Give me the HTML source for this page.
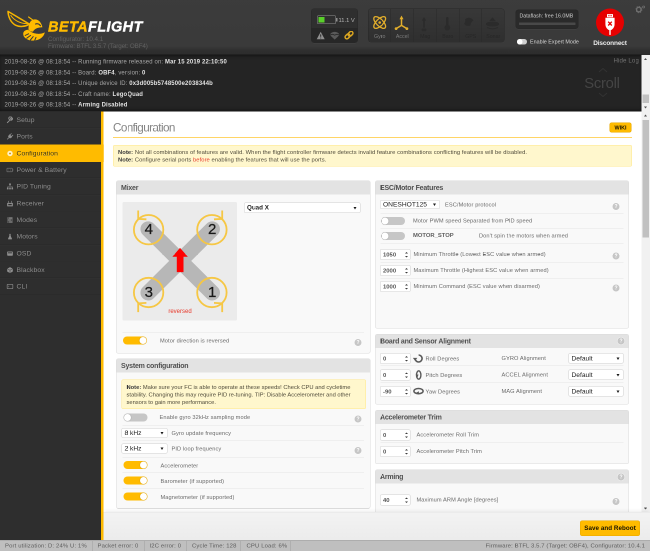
<!DOCTYPE html>
<html lang="en">
<head>
<meta charset="utf-8">
<title>Betaflight Configurator</title>
<style>
*{box-sizing:border-box;margin:0;padding:0}
html,body{width:650px;height:551px;overflow:hidden;background:#2e2e2e}
body{font-family:"Liberation Sans",sans-serif;font-size:11px;color:#7d7d7d;position:relative}
#app{position:absolute;left:0;top:0;width:1300px;height:1102px;transform:scale(.5);transform-origin:0 0;overflow:hidden;will-change:transform}
.abs{position:absolute}
/* ---------- header ---------- */
#header{position:absolute;left:0;top:0;width:1300px;height:109px;background:linear-gradient(#3c3c3c 0,#3a3a3a 85%,#303030 92%,#2c2c2c 100%)}
#logo-text{position:absolute;left:96px;top:38px;font-size:29px;line-height:30px;font-weight:bold;font-style:italic;color:#fff;letter-spacing:.800px;white-space:nowrap;-webkit-text-stroke:.8px currentColor}
#logo-text b{color:#ffbb00}
.ver{position:absolute;left:96px;font-size:12.500px;line-height:14px;color:#626262;white-space:nowrap}
.hbox{position:absolute;background:#2a2a2a;border-radius:5px;box-shadow:0 0 0 1px #272727,0 1px 0 1px #444}
.slab{position:absolute;top:48px;width:45px;text-align:center;font-size:10.5px;line-height:12px;color:#272727;white-space:nowrap}
/* ---------- log ---------- */
#log{position:absolute;left:0;top:109px;width:1283px;height:114px;background:#242424;box-shadow:inset 0 6px 6px -4px #111,inset 0 -6px 6px -4px #111}
#log p{position:absolute;left:9px;font-size:11.900px;line-height:14px;color:#a9a9a9;white-space:nowrap;letter-spacing:.280px}
#log p b{color:#e2e2e2}
/* ---------- sidebar ---------- */
#side{position:absolute;left:0;top:223px;width:202px;height:857px;background:#2e2e2e}
#side li{list-style:none;position:absolute;left:0;width:202px;height:33px;border-bottom:1px solid #292929;border-top:1px solid #323232;color:#8e8e8e;font-size:13.500px;line-height:31px;padding-left:33px;white-space:nowrap;letter-spacing:.200px}
#side li.act{background:#ffbb00;color:#3a2f00;width:207px;height:35px;line-height:33px;border-color:#ffbb00;z-index:2;text-shadow:0 1px 0 rgba(255,255,255,.35)}
/* ---------- content ---------- */
#content{position:absolute;left:202px;top:223px;width:1081px;height:857px;background:#fff;border-left:5px solid #ffbb00;overflow:hidden}
#title{position:absolute;left:226px;top:241px;font-size:23.400px;line-height:28px;color:#858585;white-space:nowrap;letter-spacing:-1.200px}
#tline{position:absolute;left:226px;top:274px;width:1038px;height:2px;background:#ffd566}
.note{position:absolute;background:#fff7cd;border:1px solid #ffe88a;border-radius:3px;color:#4f4a3a;font-size:11.600px;line-height:15px;padding:0;letter-spacing:.130px}
.note p{position:absolute;left:9px;white-space:nowrap}
.note b{color:#3a3a3a}
.box{position:absolute;background:#f9f9f9;border:1px solid #dcdcdc;border-radius:4px;overflow:hidden}
.box h3{position:absolute;left:0;top:0;right:0;height:27px;background:#e3e3e3;color:#505050;font-size:14px;line-height:26px;padding-left:9px;font-weight:bold;white-space:nowrap;letter-spacing:-.420px}
.lbl{position:absolute;font-size:11.300px;line-height:14px;color:#6a6a6a;white-space:nowrap;letter-spacing:.200px}
.sep{position:absolute;height:1px;background:#e6e6e6}
.tg{position:absolute;width:48px;height:16px;border-radius:8px;background:#ffbb00}
.tg i{position:absolute;right:1px;top:1px;width:14px;height:14px;border-radius:50%;background:#fff;box-shadow:0 0 2px rgba(0,0,0,.3)}
.tg.off{background:#c6c6c6}
.tg.off i{right:auto;left:1px}
.inp{position:absolute;height:22px;background:#fff;border:1px solid #cfcfcf;border-radius:3px;color:#555;font-size:11.800px;font-weight:bold;line-height:20px;padding-left:5px;white-space:nowrap}
.inp.sel{font-size:13.300px;color:#222;font-weight:normal;height:20px;line-height:18px}
.help{position:absolute;width:14px;height:14px;border-radius:50%;background:#c6c6c6;color:#fff;font-size:10px;line-height:14px;text-align:center;font-weight:bold;box-shadow:0 0 0 1px rgba(255,255,255,.6)}

.arr{position:absolute;right:7px;top:50%;margin-top:-2px;width:0;height:0;border-left:3.500px solid transparent;border-right:3.500px solid transparent;border-top:5px solid #1a1a1a}
.spin{position:absolute;right:2px;top:0;bottom:0;width:9px}
.spin:before,.spin:after{content:"";position:absolute;left:1px;width:0;height:0;border-left:3px solid transparent;border-right:3px solid transparent}
.spin:before{top:4.500px;border-bottom:3.500px solid #3c3c3c}
.spin:after{bottom:4.500px;border-top:3.500px solid #3c3c3c}
.spin i{display:none}
.ico{position:absolute;left:13px;top:9px;width:14px;height:14px;opacity:.9}
#side li.act .ico{top:10px}
/* ---------- toolbar / status ---------- */
#toolbar{position:absolute;left:207px;top:1024px;width:1093px;height:56px;background:linear-gradient(#f3f3f3,#ececec);border-top:1px solid #e4e4e4;box-shadow:0 -4px 7px -2px rgba(0,0,0,.08)}
.btn{position:absolute;background:#ffbb00;border:1px solid #e8a800;border-radius:4px;color:#1a1400;font-weight:bold;text-align:center;white-space:nowrap}
#status{position:absolute;left:0;top:1080px;width:1300px;height:22px;background:#bfbfbf;border-top:1px solid #9c9c9c;color:#5c5c5c;font-size:11.800px;line-height:20px;letter-spacing:.300px}
#status span{position:absolute;top:0;white-space:nowrap}
#status i{position:absolute;top:0;width:1px;height:22px;background:#9f9f9f}
/* ---------- scrollbars ---------- */
.sb{position:absolute;left:1283px;width:17px;background:#f1f1f1}
.sb u{position:absolute;left:2px;width:13px;background:#c1c1c1}
.sb b{position:absolute;left:5px;width:0;height:0;border-left:3.500px solid transparent;border-right:3.500px solid transparent}
.sb .au{border-bottom:4px solid #505050}
.sb .ad{border-top:4px solid #505050}
</style>
</head>
<body>
<div id="app">

<!-- HEADER -->
<div id="header">
  <div id="logo-text"><b>BETA</b>FLIGHT</div>
  <div class="ver" style="top:71px">Configurator: 10.4.1</div>
  <div class="ver" style="top:85px;letter-spacing:-.200px">Firmware: BTFL 3.5.7 (Target: OBF4)</div>

  <svg class="abs" style="left:0;top:0" width="110" height="110" viewBox="0 0 55 55">
    <g fill="none" stroke="#f5b400" stroke-linejoin="round" stroke-linecap="round">
      <path d="M8 11.400 C8.200 16.500 10.500 22.500 15.500 25.200 C19.500 27.200 25 26.800 29.500 24.200 L8 11.400 Z" stroke-width="1.500"/>
      <path d="M10.800 15.400 C14 20.400 20.500 23.800 27.500 23.600" stroke-width="1"/>
      <path d="M28.600 17 L32.500 19.800" stroke-width="1.200"/>
    </g>
    <g fill="#ffbb00">
      <path d="M30.500 21.500 C32 19.400 35.200 18.800 37.600 20 C40 21.200 41.600 23.600 42.400 27.200 C40 27.200 37.800 27.600 36 28.600 C34.600 29.400 33.600 30.400 33 31.600 C31.200 31.800 29.400 31.200 28.600 29.800 C28.200 27 29 23.800 30.500 21.500 Z"/>
      <path d="M28.200 29.800 C30.200 31.800 33.400 33.400 37 33.800 C39.800 34 42.600 33.600 44.800 32.400 C44 37 39.200 40.600 33 40.600 C27.200 40.600 23 37.400 23.200 33.600 C23.400 31.200 25.600 29.800 28.200 29.800 Z"/>
    </g>
    <g fill="none" stroke="#3a3a3a" stroke-linecap="round">
      <path d="M35.600 24 C37.200 23.400 39.200 24 40.400 25.600" stroke-width="1.200"/>
      <path d="M25.200 35.400 L28.600 33.800 M26.800 38.200 L30.600 35.400 M30.400 40 L33.200 36.600 M34.800 40.200 L36 37.400" stroke-width="1"/>
    </g>
  </svg>

  <!-- quad status -->
  <div class="hbox" style="left:623px;top:18px;width:92px;height:67px;background:linear-gradient(#2f2f2f 0,#2f2f2f 56%,#272727 56%,#272727 100%)">
    <div class="abs" style="left:11px;top:13px;width:38px;height:17px;border:1.500px solid #8f8f8f;border-radius:2px;background:#2f2f2f"></div>
    <div class="abs" style="left:14px;top:16px;width:12px;height:11px;background:#59d02a"></div>
    <div class="abs" style="left:49px;top:18px;width:3px;height:7px;background:#8f8f8f"></div>
    <div class="abs" style="left:54px;top:15px;font-size:11.500px;line-height:14px;color:#b8b8b8;white-space:nowrap">11.1 V</div>
    <svg class="abs" style="left:8px;top:44px" width="80" height="18" viewBox="0 0 40 9">
      <path d="M5.2 0.8 L9.2 8.2 L1.2 8.2 Z" fill="#8f8f8f"/>
      <path d="M5.2 3.4 L5.2 5.8 M5.2 6.6 L5.2 7.4" stroke="#2a2a2a" stroke-width="1"/>
      <path d="M14.6 4.2 C14.6 -0.2 23.8 -0.2 23.8 4.2 L19.2 8.6 Z" fill="#5a5a5a"/>
      <path d="M14.6 4.2 C16 3 17.6 3 19.2 4.2 C20.8 3 22.4 3 23.8 4.2" fill="none" stroke="#2a2a2a" stroke-width=".8"/>
      <g fill="none" stroke="#d9a521" stroke-width="1.5">
        <rect x="29.3" y="3.6" width="5.4" height="3.6" rx="1.8" transform="rotate(-45 32 5.4)"/>
        <rect x="32.3" y="1.0" width="5.4" height="3.6" rx="1.8" transform="rotate(-45 35 2.8)"/>
      </g>
    </svg>
  </div>

  <!-- sensors -->
  <div class="hbox" style="left:737px;top:18px;width:271px;height:66px;background:linear-gradient(#383838,#2f2f2f);overflow:hidden">
    <i class="abs" style="left:44px;top:0;width:1px;height:66px;background:#292929"></i>
    <i class="abs" style="left:90px;top:0;width:1px;height:66px;background:#292929"></i>
    <i class="abs" style="left:135px;top:0;width:1px;height:66px;background:#292929"></i>
    <i class="abs" style="left:181px;top:0;width:1px;height:66px;background:#292929"></i>
    <i class="abs" style="left:226px;top:0;width:1px;height:66px;background:#292929"></i>
    <svg class="abs" style="left:0;top:0" width="271" height="66" viewBox="0 0 135.5 33">
      <g fill="none" stroke="#e2ae2c" stroke-width="1.3">
        <ellipse cx="11.2" cy="13.5" rx="7.6" ry="3.4" transform="rotate(45 11.2 13.5)"/>
        <ellipse cx="11.2" cy="13.5" rx="7.6" ry="3.4" transform="rotate(-45 11.2 13.5)"/>
      </g>
      <circle cx="11.2" cy="13.5" r="1.3" fill="#e2ae2c"/>
      <g stroke="#e2ae2c" stroke-width="1.5" fill="#e2ae2c" stroke-linecap="round">
        <path d="M33 16.400 L33 9.800 M33 16.400 L28 19.400 M33 16.400 L38 19.400" fill="none"/>
        <path d="M33 7.200 L34.500 10 L31.500 10 Z" stroke-width=".6"/>
        <circle cx="27.600" cy="19.600" r="1.400" stroke="none"/>
        <circle cx="38.400" cy="19.600" r="1.400" stroke="none"/>
      </g>
      <g fill="#2b2b2b" stroke="none">
        <path d="M55.5 8 l2.2 3.6 h-1.4 v7 h-1.6 v-7 h-1.4 Z"/>
        <rect x="53.2" y="19.6" width="4.6" height="2.6" rx="1"/>
        <rect x="77.6" y="8" width="2.4" height="9" rx="1.2"/>
        <circle cx="78.8" cy="18.6" r="2.8"/>
        <path d="M96.5 10.5 c3 -3 6.5 -2 8.5 1 c-2 1 -3 3 -3 5 c-3 1 -5.500 0 -6.500 -2 c1.500 -1 1.500 -3 1 -4 Z"/>
        <ellipse cx="124" cy="15" rx="6.6" ry="2.4"/>
        <path d="M124 8.400 l3.200 3.600 h-6.400 Z"/>
        <path d="M118.500 18.400 q5.500 3 11 0" fill="none" stroke="#2b2b2b" stroke-width="1"/>
      </g>
    </svg>
    <div class="slab" style="left:0;color:#7e7e7e">Gyro</div>
    <div class="slab" style="left:45px;color:#7e7e7e">Accel</div>
    <div class="slab" style="left:91px">Mag</div>
    <div class="slab" style="left:136px">Baro</div>
    <div class="slab" style="left:182px">GPS</div>
    <div class="slab" style="left:227px">Sonar</div>
  </div>

  <!-- dataflash -->
  <div class="hbox" style="left:1032px;top:20px;width:124px;height:37px">
    <div class="abs" style="left:7px;top:4px;font-size:10.5px;line-height:14px;color:#cfcfcf;white-space:nowrap">Dataflash: free 16.0MB</div>
    <div class="abs" style="left:6px;top:25px;width:113px;height:5px;background:#494949;border-radius:1px"></div>
  </div>
  <div class="abs" style="left:1034px;top:78px;width:20px;height:11px;border-radius:6px;background:#cfcfcf"><i class="abs" style="left:0;top:0;width:11px;height:11px;border-radius:50%;background:#fff"></i></div>
  <div class="abs" style="left:1060px;top:76px;font-size:10.8px;line-height:14px;color:#d6d6d6;white-space:nowrap">Enable Expert Mode</div>

  <!-- disconnect -->
  <div class="abs" style="left:1192px;top:17px;width:56px;height:56px;border-radius:50%;background:#e60000"></div>
  <svg class="abs" style="left:1192px;top:17px" width="56" height="56" viewBox="0 0 28 28">
    <path d="M11 5.600 h6 v3.200 h-6 Z M9.400 9.200 h9.200 v6.400 c0 3.200 -2 5.400 -3.800 6 h-1.600 c-1.800 -.6 -3.800 -2.800 -3.800 -6 Z" fill="#fff"/>
    <path d="M13.300 21 h1.400 v5.400 h-1.400 Z" fill="#fff"/>
    <path d="M12.200 13.200 l3.600 3.800 M15.800 13.200 l-3.600 3.800" stroke="#e60000" stroke-width="1.300" fill="none"/>
    <path d="M12.300 6.600 h1.200 v1.200 h-1.200 Z M14.500 6.600 h1.200 v1.200 h-1.200 Z" fill="#e60000"/>
  </svg>
  <div class="abs" style="left:1170px;top:78px;width:100px;text-align:center;font-size:13px;line-height:16px;font-weight:bold;color:#ececec;white-space:nowrap;letter-spacing:-.3px">Disconnect</div>

  <!-- gear -->
  <svg class="abs" style="left:1268px;top:8px" width="28" height="22" viewBox="0 0 14 11">
    <circle cx="4.800" cy="5.600" r="2.300" fill="none" stroke="#6e6e6e" stroke-width="1.500"/>
    <circle cx="4.800" cy="5.600" r="3.200" fill="none" stroke="#6e6e6e" stroke-width=".8" stroke-dasharray="1 1.500"/>
    <circle cx="9.600" cy="3" r="1" fill="none" stroke="#6e6e6e" stroke-width=".8"/>
  </svg>
</div>

<!-- LOG -->
<div id="log">
  <p style="top:7px">2019-08-26 @ 08:18:54 -- Running firmware released on: <b>Mar 15 2019 22:10:50</b></p>
  <p style="top:29px">2019-08-26 @ 08:18:54 -- Board: <b>OBF4</b>, version: <b>0</b></p>
  <p style="top:50px">2019-08-26 @ 08:18:54 -- Unique device ID: <b>0x3d005b5748500e2038344b</b></p>
  <p style="top:72px">2019-08-26 @ 08:18:54 -- Craft name: <b>LegoQuad</b></p>
  <p style="top:93px">2019-08-26 @ 08:18:54 -- <b>Arming Disabled</b></p>
</div>

<div class="abs" style="left:1227px;top:113px;font-size:12.300px;line-height:16px;color:#727272;white-space:nowrap;letter-spacing:.200px">Hide Log</div>
<div class="abs" style="left:1164px;top:148px;width:80px;text-align:center;font-size:29.500px;line-height:36px;color:#454545;white-space:nowrap;letter-spacing:-.500px">Scroll</div>
<svg class="abs" style="left:1190px;top:132px" width="32" height="66" viewBox="0 0 16 33"><path d="M4 6 L8 2.500 L12 6 M4 27 L8 30.500 L12 27" fill="none" stroke="#333" stroke-width="1"/></svg>

<!-- SIDEBAR -->
<ul id="side">
  <li style="top:0px"><svg class="ico" viewBox="0 0 16 16"><path d="M2 14 L8.500 7.500 M8.200 7.800 a3.600 3.600 0 1 1 3.600 -5.600 l-2.400 2.400 l2 2 l2.400 -2.400 a3.600 3.600 0 0 1 -5.600 3.600" fill="none" stroke="#999" stroke-width="2.200" stroke-linecap="round"/></svg>Setup</li>
  <li style="top:33px"><svg class="ico" viewBox="0 0 16 16"><path d="M2 14 L5.500 10.500 M4.500 8 L8 11.500 L12 9 L7 4 Z M9 3.500 L11 1.500 M12.500 7 L14.500 5" fill="#999" stroke="#999" stroke-width="1.800" stroke-linecap="round" stroke-linejoin="round"/></svg>Ports</li>
  <li class="act" style="top:66px"><svg class="ico" viewBox="0 0 16 16"><circle cx="8" cy="8" r="6.200" fill="#fff8e0"/><circle cx="8" cy="8" r="2" fill="#b98300"/></svg>Configuration</li>
  <li style="top:100px"><svg class="ico" viewBox="0 0 16 16"><rect x="1" y="4" width="12.500" height="8" rx="1" fill="none" stroke="#777" stroke-width="1.600"/><rect x="14" y="6.500" width="1.500" height="3" fill="#777"/><path d="M4 8 h2 M8.500 8 h2.500 M9.750 6.750 v2.500" stroke="#777" stroke-width="1"/></svg>Power &amp; Battery</li>
  <li style="top:133px"><svg class="ico" viewBox="0 0 16 16"><path d="M8 1.500 v5 M2.500 13 v-4 h11 v4" fill="none" stroke="#999" stroke-width="1.400"/><rect x="6" y="1" width="4" height="4" fill="#999"/><rect x="1" y="11" width="3.600" height="3.600" fill="#999"/><rect x="6.200" y="11" width="3.600" height="3.600" fill="#999"/><rect x="11.400" y="11" width="3.600" height="3.600" fill="#999"/></svg>PID Tuning</li>
  <li style="top:167px"><svg class="ico" viewBox="0 0 16 16"><rect x="1.500" y="6.500" width="13" height="8" rx="1" fill="#999"/><path d="M5 6.500 v-4.500 M11 6.500 v-4.500" stroke="#999" stroke-width="1.400"/><rect x="4" y="9" width="8" height="3" fill="#2e2e2e"/></svg>Receiver</li>
  <li style="top:200px"><svg class="ico" viewBox="0 0 16 16"><rect x="2" y="2" width="12" height="3" rx="1" fill="#999"/><rect x="2" y="6.500" width="12" height="3" rx="1" fill="#999"/><rect x="2" y="11" width="12" height="3" rx="1" fill="#999"/><circle cx="5" cy="3.500" r="1" fill="#2e2e2e"/><circle cx="11" cy="8" r="1" fill="#2e2e2e"/><circle cx="5" cy="12.500" r="1" fill="#2e2e2e"/></svg>Modes</li>
  <li style="top:233px"><svg class="ico" viewBox="0 0 16 16"><path d="M6.500 2 h3 v4.500 l3 6.500 a1 1 0 0 1 -1 1.500 h-7 a1 1 0 0 1 -1 -1.500 l3 -6.500 Z" fill="#999"/></svg>Motors</li>
  <li style="top:267px"><svg class="ico" viewBox="0 0 16 16"><rect x="1.500" y="3.500" width="13" height="9.500" rx="1.500" fill="#999"/><rect x="3.500" y="5.500" width="9" height="2" fill="#2e2e2e"/></svg>OSD</li>
  <li style="top:300px"><svg class="ico" viewBox="0 0 16 16"><path d="M8 1.500 L14.500 5 V11.500 L8 15 L1.500 11.500 V5 Z" fill="#999"/><path d="M1.500 5 L8 8.500 L14.500 5 M8 8.500 V15" stroke="#2e2e2e" stroke-width="1" fill="none"/></svg>Blackbox</li>
  <li style="top:333px"><svg class="ico" viewBox="0 0 16 16"><rect x="1.500" y="3" width="13" height="10" rx="1" fill="none" stroke="#999" stroke-width="1.500"/><path d="M4 6.500 l2 1.500 l-2 1.500" fill="none" stroke="#999" stroke-width="1"/></svg>CLI</li>
</ul>

<!-- CONTENT -->
<div id="content"></div>
<div id="title">Configuration</div>
<div id="tline"></div>

<div class="btn" style="left:1219px;top:245px;width:44px;height:20px;font-size:10.800px;line-height:18px">WIKI</div>

<div class="note" style="left:226px;top:290px;width:1038px;height:43px">
  <p style="top:5px"><b>Note:</b> Not all combinations of features are valid. When the flight controller firmware detects invalid feature combinations conflicting features will be disabled.</p>
  <p style="top:20px"><b>Note:</b> Configure serial ports <span style="color:#e8392b">before</span> enabling the features that will use the ports.</p>
</div>

<!-- Mixer -->
<div class="box" style="left:232px;top:361px;width:509px;height:346px">
  <h3>Mixer</h3>
  <svg class="abs" style="left:12px;top:42px" width="229" height="237" viewBox="122.500 201.500 114.500 118.500">
    <rect x="122.500" y="201.500" width="114.500" height="118.500" rx="1.500" fill="#ebebeb"/>
    <g stroke="#b7b7b7" stroke-width="15.500" stroke-linecap="round">
      <path d="M148.200 228.600 L212.200 292.200 M212.200 228.600 L148.200 292.200"/>
    </g>
    <path d="M180 247.400 L187.800 256.200 L183.500 256.200 L183.500 271.600 L176.800 271.600 L176.800 256.200 L172.400 256.200 Z" fill="#ff0000"/>
    <g fill="none" stroke="#f6c744" stroke-width="1.800">
      <circle cx="148.600" cy="229.200" r="14.700"/>
      <circle cx="211.900" cy="229.200" r="14.700"/>
      <circle cx="148.600" cy="292" r="14.700"/>
      <circle cx="211.900" cy="292" r="14.700"/>
      <path d="M138.200 210 L138.200 218.400 L146.400 218.800"/>
      <path d="M222.200 210 L222.200 218.400 L214 218.800"/>
      <path d="M138.200 311.600 L138.200 302.800 L146.400 302.400"/>
      <path d="M222.200 311.600 L222.200 302.800 L214 302.400"/>
    </g>
    <g font-family="Liberation Sans, sans-serif" font-size="15" fill="#1a1a1a" stroke="#1a1a1a" stroke-width=".250" text-anchor="middle">
      <text x="148.800" y="233.600">4</text>
      <text x="212.200" y="233.600">2</text>
      <text x="148.800" y="296.400">3</text>
      <text x="212.200" y="296.400">1</text>
    </g>
    <text x="180" y="312.600" font-family="Liberation Sans, sans-serif" font-size="6" fill="#e8392b" text-anchor="middle">reversed</text>
  </svg>
  <div class="inp sel" style="left:255px;top:43px;width:233px;height:21px;font-weight:bold;font-size:12.500px;line-height:19px">Quad X<span class="arr"></span></div>
  <div class="sep" style="left:12px;right:12px;top:302px"></div>
  <div class="tg" style="left:13px;top:311px"><i></i></div>
  <div class="lbl" style="left:87px;top:312px">Motor direction is reversed</div>
  <div class="help" style="left:476px;top:316px">?</div>
</div>

<!-- System configuration -->
<div class="box" style="left:232px;top:717px;width:509px;height:300px">
  <h3>System configuration</h3>
  <div class="note" style="left:10px;top:41px;width:489px;height:59px;font-size:11.500px;letter-spacing:.020px">
    <p style="top:7px"><b>Note:</b> Make sure your FC is able to operate at these speeds! Check CPU and cycletime</p>
    <p style="top:22px">stability. Changing this may require PID re-tuning. TIP: Disable Accelerometer and other</p>
    <p style="top:37px">sensors to gain more performance.</p>
  </div>
  <div class="tg off" style="left:14px;top:109px"><i></i></div>
  <div class="lbl" style="left:86px;top:109px">Enable gyro 32kHz sampling mode</div>
  <div class="help" style="left:476px;top:113px">?</div>
  <div class="sep" style="left:12px;right:12px;top:132px"></div>
  <div class="inp sel" style="left:10px;top:138px;width:92px">8 kHz<span class="arr"></span></div>
  <div class="lbl" style="left:110px;top:141px">Gyro update frequency</div>
  <div class="sep" style="left:12px;right:12px;top:163px"></div>
  <div class="inp sel" style="left:10px;top:169px;width:92px">2 kHz<span class="arr"></span></div>
  <div class="lbl" style="left:110px;top:172px">PID loop frequency</div>
  <div class="help" style="left:476px;top:176px">?</div>
  <div class="sep" style="left:12px;right:12px;top:196px"></div>
  <div class="tg" style="left:14px;top:204px"><i></i></div>
  <div class="lbl" style="left:88px;top:206px">Accelerometer</div>
  <div class="sep" style="left:12px;right:12px;top:227px"></div>
  <div class="tg" style="left:14px;top:235px"><i></i></div>
  <div class="lbl" style="left:88px;top:237px">Barometer (if supported)</div>
  <div class="sep" style="left:12px;right:12px;top:259px"></div>
  <div class="tg" style="left:14px;top:267px"><i></i></div>
  <div class="lbl" style="left:88px;top:269px">Magnetometer (if supported)</div>
</div>

<!-- ESC/Motor Features -->
<div class="box" style="left:750px;top:361px;width:508px;height:296px">
  <h3>ESC/Motor Features</h3>
  <div class="inp sel" style="left:9px;top:38px;width:120px;height:18px;line-height:16px">ONESHOT125<span class="arr"></span></div>
  <div class="lbl" style="left:139px;top:40px">ESC/Motor protocol</div>
  <div class="help" style="left:474px;top:44px">?</div>
  <div class="sep" style="left:10px;right:10px;top:64px"></div>
  <div class="tg off" style="left:11px;top:72px"><i></i></div>
  <div class="lbl" style="left:75px;top:72px">Motor PWM speed Separated from PID speed</div>
  <div class="sep" style="left:10px;right:10px;top:94px"></div>
  <div class="tg off" style="left:11px;top:102px"><i></i></div>
  <div class="lbl" style="left:75px;top:101px;font-size:11.700px;font-weight:bold;color:#606060;letter-spacing:0">MOTOR_STOP</div>
  <div class="lbl" style="left:207px;top:102px">Don't spin the motors when armed</div>
  <div class="sep" style="left:10px;right:10px;top:125px"></div>
  <div class="inp" style="left:9px;top:136px;width:61px">1050<span class="spin"><i></i></span></div>
  <div class="lbl" style="left:76px;top:139px">Minimum Throttle (Lowest ESC value when armed)</div>
  <div class="help" style="left:474px;top:143px">?</div>
  <div class="sep" style="left:10px;right:10px;top:163px"></div>
  <div class="inp" style="left:9px;top:168px;width:61px">2000<span class="spin"><i></i></span></div>
  <div class="lbl" style="left:76px;top:171px">Maximum Throttle (Highest ESC value when armed)</div>
  <div class="sep" style="left:10px;right:10px;top:195px"></div>
  <div class="inp" style="left:9px;top:200px;width:61px">1000<span class="spin"><i></i></span></div>
  <div class="lbl" style="left:76px;top:203px">Minimum Command (ESC value when disarmed)</div>
  <div class="help" style="left:474px;top:207px">?</div>
</div>

<!-- Board and Sensor Alignment -->
<div class="box" style="left:750px;top:668px;width:508px;height:141px">
  <h3>Board and Sensor Alignment</h3>
  <div class="help" style="left:484px;top:6px">?</div>
  <div class="inp" style="left:9px;top:37px;width:61px">0<span class="spin"><i></i></span></div>
  <svg class="abs" style="left:74px;top:38px" width="24" height="20" viewBox="0 0 12 10"><path d="M2.600 5 A3.500 3.500 0 1 0 6.100 1.500" fill="none" stroke="#5a5a5a" stroke-width="1.600"/><path d="M.4 4.400 L2.600 7.400 L4.800 4.400 Z" fill="#5a5a5a"/></svg><div class="lbl" style="left:100px;top:41px">Roll Degrees</div>
  <div class="lbl" style="left:252px;top:40px">GYRO Alignment</div>
  <div class="inp sel" style="left:386px;top:37px;width:110px;height:21px;line-height:19px">Default<span class="arr"></span></div>
  <div class="sep" style="left:10px;right:10px;top:62px"></div>
  <div class="inp" style="left:9px;top:70px;width:61px">0<span class="spin"><i></i></span></div>
  <svg class="abs" style="left:74px;top:70px" width="24" height="22" viewBox="0 0 12 11"><ellipse cx="6.200" cy="5.500" rx="2.200" ry="4.200" fill="none" stroke="#5a5a5a" stroke-width="1.400"/><path d="M3.200 5 L5.200 7.600 L6 5 Z" fill="#5a5a5a"/></svg><div class="lbl" style="left:100px;top:74px">Pitch Degrees</div>
  <div class="lbl" style="left:252px;top:73px">ACCEL Alignment</div>
  <div class="inp sel" style="left:386px;top:70px;width:110px;height:21px;line-height:19px">Default<span class="arr"></span></div>
  <div class="sep" style="left:10px;right:10px;top:95px"></div>
  <div class="inp" style="left:9px;top:103px;width:61px">-90<span class="spin"><i></i></span></div>
  <svg class="abs" style="left:74px;top:104px" width="24" height="20" viewBox="0 0 12 10"><ellipse cx="6" cy="4.600" rx="4.600" ry="2.600" fill="none" stroke="#5a5a5a" stroke-width="1.500"/><path d="M3.600 6.200 L6.400 7.800 L6.400 4.800 Z" fill="#5a5a5a"/></svg><div class="lbl" style="left:100px;top:107px">Yaw Degrees</div>
  <div class="lbl" style="left:252px;top:106px">MAG Alignment</div>
  <div class="inp sel" style="left:386px;top:103px;width:110px;height:21px;line-height:19px">Default<span class="arr"></span></div>
</div>

<!-- Accelerometer Trim -->
<div class="box" style="left:750px;top:820px;width:508px;height:108px">
  <h3>Accelerometer Trim</h3>
  <div class="inp" style="left:9px;top:38px;width:61px">0<span class="spin"><i></i></span></div>
  <div class="lbl" style="left:82px;top:41px">Accelerometer Roll Trim</div>
  <div class="sep" style="left:10px;right:10px;top:64px"></div>
  <div class="inp" style="left:9px;top:71px;width:61px">0<span class="spin"><i></i></span></div>
  <div class="lbl" style="left:82px;top:74px">Accelerometer Pitch Trim</div>
</div>

<!-- Arming -->
<div class="box" style="left:750px;top:939px;width:508px;height:107px">
  <h3>Arming</h3>
  <div class="help" style="left:484px;top:7px">?</div>
  <div class="inp" style="left:9px;top:49px;width:61px">40<span class="spin"><i></i></span></div>
  <div class="lbl" style="left:82px;top:52px">Maximum ARM Angle [degrees]</div>
  <div class="help" style="left:474px;top:56px">?</div>
</div>

<!-- scrollbars -->
<div class="sb" style="top:110px;height:113px"><u style="top:79px;height:17px"></u><b class="au" style="top:6px"></b><b class="ad" style="bottom:6px"></b></div>
<div class="sb" style="top:223px;height:802px"><u style="top:17px;height:235px"></u><b class="au" style="top:6px"></b><b class="ad" style="bottom:6px"></b></div>

<!-- TOOLBAR -->
<div id="toolbar"><div class="btn" style="left:953px;top:16px;width:120px;height:31px;font-size:12.500px;line-height:29px;letter-spacing:.100px">Save and Reboot</div></div>

<!-- STATUS -->
<div id="status">
  <span style="left:10px">Port utilization: D: 24% U: 1%</span>
  <i style="left:185px"></i><span style="left:195px">Packet error: 0</span>
  <i style="left:289px"></i><span style="left:299px">I2C error: 0</span>
  <i style="left:372px"></i><span style="left:384px">Cycle Time: 128</span>
  <i style="left:481px"></i><span style="left:493px">CPU Load: 6%</span><i style="left:580px"></i>
  <span style="right:10px;letter-spacing:.230px">Firmware: BTFL 3.5.7 (Target: OBF4), Configurator: 10.4.1</span>
</div>

</div>
</body>
</html>
